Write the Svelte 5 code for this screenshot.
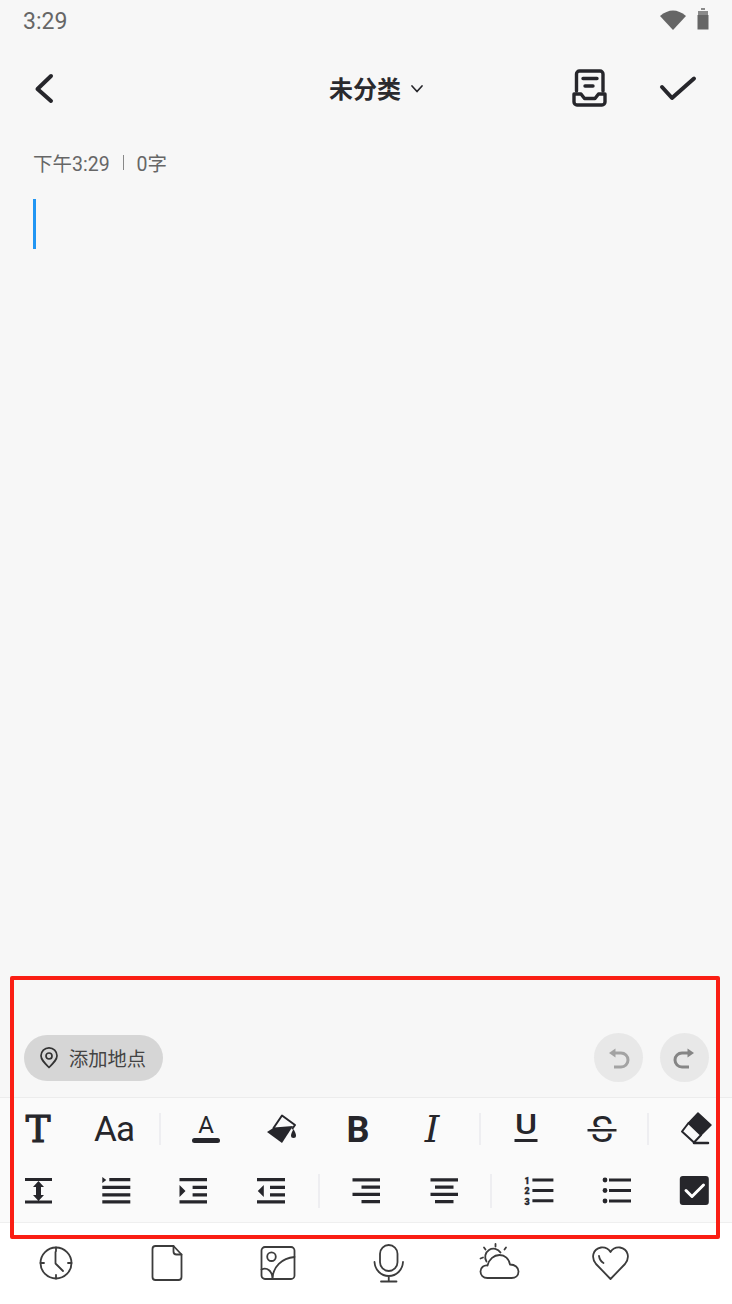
<script>
  const clockTicks = [0, 90, 180, 270];
</script>

<div class="screen">
  <div class="status">
    <span class="time">3:29</span>
    <svg class="wifi" width="28" height="22" viewBox="0 0 28 22"><path d="M1 7Q14-4 27 7L14 21Z" fill="#666" /></svg>
    <svg class="batt" width="12" height="22" viewBox="0 0 12 22"><path d="M4 0H8V2H4ZM1 3H11V21H1Z" fill="#8a8a8a" /><path d="M0.5 7H11.5V21.500H0.500Z" fill="#666" /></svg>
  </div>

  <header class="head">
    <div class="left">
      <svg width="24" height="36" viewBox="0 0 24 36"><path d="M19 5 5.500 18 19 30" class="s" stroke-width="4" /></svg>
    </div>
    <div class="title"><span>未分类</span><svg width="14" height="10" viewBox="0 0 14 10"><path d="M2 2 7 7.500 12 2" class="s" stroke-width="1.700" /></svg></div>
    <div class="right">
      <svg width="44" height="44" viewBox="0 0 44 44">
        <path d="M8.500 24V7a3 3 0 0 1 3-3H32a3 3 0 0 1 3 3V24M15 11.500H29M17 19H25" class="s" stroke-width="3.400" />
        <path d="M6 27H13L16.500 31.500H27L30.500 27H37V35a3 3 0 0 1-3 3H9a3 3 0 0 1-3-3Z" class="s" stroke-width="3.400" />
      </svg>
      <svg width="44" height="44" viewBox="0 0 44 44"><path d="M6 20 16 31 38 11.500" class="s" stroke-width="4" /></svg>
    </div>
  </header>

  <div class="meta"><span>下午3:29</span><i></i><span>0字</span></div>
  <div class="caret"></div>
  <div class="grow"></div>

  <div class="actions">
    <div class="pill">
      <svg width="20" height="24" viewBox="0 0 20 24"><path d="M10 21.500C5 16.500 2 13.500 2 9.800A8 8 0 0 1 18 9.800C18 13.500 15 16.500 10 21.500Z" class="s t" stroke-width="1.700" /><circle cx="10" cy="10" r="3" class="s t" stroke-width="1.700" /></svg>
      <span>添加地点</span>
    </div>
    <div class="round">
      <svg width="49" height="49" viewBox="0 0 49 49"><path d="M20 20H27a7 7 0 0 1 0 14H20" class="s u" stroke-width="3" /><path d="M15 20 21.500 15.500V24.500Z" fill="#a3a3a3" /></svg>
    </div>
    <div class="round">
      <svg width="49" height="49" viewBox="0 0 49 49"><path d="M29 20H22a7 7 0 0 0 0 14H29" class="s r" stroke-width="3" /><path d="M34 20 27.500 15.500V24.500Z" fill="#858585" /></svg>
    </div>
  </div>

  <div class="toolbar">
    <div class="row">
      <div class="cell"><svg class="ic lt" viewBox="0 -10 40 60"><text x="20" y="33" class="serif-b" font-size="37">T</text></svg></div>
      <div class="cell"><svg class="ic lt" viewBox="0 -10 40 60"><text x="20" y="32" class="sans" font-size="35" letter-spacing="-1">Aa</text></svg></div>
      <div class="slot"><b></b></div>
      <div class="cell"><svg class="ic lt" viewBox="0 -10 40 60"><text x="20" y="24" class="sans" font-size="24">A</text><rect x="6" y="29" width="28" height="5" rx="2.500" /></svg></div>
      <div class="cell"><svg class="ic" viewBox="0 0 40 40">
        <path d="M5 23 12 18.500 31 17 20 34Z" />
        <path d="M11.500 19 20 6.500 33 16 30.500 19.500" class="s" stroke-width="2" />
        <path d="M31.500 20C33 23 34 25 34 26.500A2.500 2.500 0 0 1 29 26.500C29 25 30 23 31.500 20Z" />
      </svg></div>
      <div class="cell"><svg class="ic lt" viewBox="0 -10 40 60"><text x="20" y="33" class="sans-b" font-size="36">B</text></svg></div>
      <div class="cell"><svg class="ic lt" viewBox="0 -10 40 60"><text x="18" y="33" class="serif-i" font-size="37">I</text></svg></div>
      <div class="slot"><b></b></div>
      <div class="cell"><svg class="ic lt" viewBox="0 -10 40 60"><text transform="translate(20 25) scale(1.250 1)" class="sans-m" font-size="27">U</text><rect x="8.500" y="30" width="23" height="3" /></svg></div>
      <div class="cell"><svg class="ic lt" viewBox="0 -10 40 60"><text x="20" y="33" class="sans" font-size="37">S</text><rect x="5" y="18" width="30" height="6.500" style="fill:#fafafa" /><rect x="5.500" y="20" width="29" height="2.500" /></svg></div>
      <div class="slot"><b></b></div>
      <div class="cell"><svg class="ic" viewBox="0 0 40 40">
        <path d="M24 4 37 16 27 26 14.500 14Z" stroke="#26262b" stroke-width="1.500" stroke-linejoin="round" />
        <path d="M14.500 14 27 26 20 33.500 8 22.500Z" style="fill:#fafafa" stroke="#26262b" stroke-width="2" stroke-linejoin="round" />
        <path d="M20 34H34" class="s" stroke-width="2.500" />
      </svg></div>
    </div>
    <div class="row">
      <div class="cell"><svg class="ic" viewBox="0 0 40 40"><path d="M6 7H33V10H6ZM6 29.500H33V32.500H6ZM19.500 10 25 16H22V24H25L19.500 30 14 24H17V16H14Z" /></svg></div>
      <div class="cell"><svg class="ic" viewBox="0 0 40 40"><path d="M5.300 6 9.300 9 5.300 12ZM12.300 7H33.300V10.300H12.300ZM5.300 14.700H33.300V18H5.300ZM5.300 22.300H33.300V25.600H5.300ZM5.300 29.300H33.300V32.600H5.300Z" /></svg></div>
      <div class="cell"><svg class="ic" viewBox="0 0 40 40"><path d="M5.500 7H33V10.300H5.500ZM5.500 29.300H33V32.600H5.500ZM18.600 14.700H33V18H18.600ZM18.600 22.300H33V25.600H18.600ZM5.500 14 11.500 20 5.500 26Z" /></svg></div>
      <div class="cell"><svg class="ic" viewBox="0 0 40 40"><path d="M5 7H33V10.300H5ZM5 29.300H33V32.600H5ZM18 14.700H33V18H18ZM18 22.300H33V25.600H18ZM11.800 14 5.800 20 11.800 26Z" /></svg></div>
      <div class="slot"><b class="tall"></b></div>
      <div class="cell"><svg class="ic" viewBox="0 0 40 40"><path d="M6.500 7.200H34V10.500H6.500ZM15.500 14.500H34V17.800H15.500ZM6.500 21.700H34V25H6.500ZM15.500 28.900H34V32.200H15.500Z" /></svg></div>
      <div class="cell"><svg class="ic" viewBox="0 0 40 40"><path d="M6.500 7.200H34V10.500H6.500ZM11 14.500H29.500V17.800H11ZM6.500 21.700H34V25H6.500ZM11 28.900H29.500V32.200H11Z" /></svg></div>
      <div class="slot"><b class="tall"></b></div>
      <div class="cell"><svg class="ic" viewBox="0 0 40 40">
        <text x="9" y="12.500" class="num" font-size="8.800">1</text><text x="9" y="23" class="num" font-size="8.800">2</text><text x="9" y="33.500" class="num" font-size="8.800">3</text>
        <path d="M14.400 7.500H35.400V10.500H14.400ZM14.400 18H35.400V21H14.400ZM14.400 28.300H35.400V31.300H14.400Z" />
      </svg></div>
      <div class="cell"><svg class="ic" viewBox="0 0 40 40">
        <circle cx="10" cy="9" r="2.400" /><circle cx="10" cy="19.500" r="2.400" /><circle cx="10" cy="30" r="2.400" />
        <path d="M14 7.500H36V10.500H14ZM14 18H36V21H14ZM14 28.500H36V31.500H14Z" />
      </svg></div>
      <div class="cell"><svg class="ic" viewBox="0 0 40 40"><rect x="6.800" y="5" width="29" height="29" rx="3" /><path d="M13 19.500 19 25.500 30.500 14" stroke="#fff" stroke-width="3" stroke-linecap="round" stroke-linejoin="round" style="fill:none" /></svg></div>
    </div>
  </div>

  <nav class="bottom">
    <svg class="bi" viewBox="0 0 44 44">
      <circle cx="22" cy="22" r="15.500" />
      {#each clockTicks as a}<path d="M22 6.500V10" transform="rotate({a} 22 22)" />{/each}
      <path d="M21.500 11V22.500L29 30" />
    </svg>
    <svg class="bi" viewBox="0 0 44 44">
      <path d="M10.500 5H28.500L36.500 13.500V36a3 3 0 0 1-3 3H10.500a3 3 0 0 1-3-3V8a3 3 0 0 1 3-3Z" />
      <path d="M28.500 5V10.500a3 3 0 0 0 3 3H36.500" />
    </svg>
    <svg class="bi" viewBox="0 0 44 44">
      <rect x="5.500" y="6" width="33" height="32" rx="3.500" />
      <circle cx="15.500" cy="15.700" r="4.300" />
      <path d="M16.500 38C16.500 26 26 17 38.500 16M5.500 28.500C11 26 16.500 30 16.500 38" />
    </svg>
    <svg class="bi" viewBox="0 0 44 44">
      <rect x="13" y="4" width="17.500" height="26" rx="8.750" />
      <path d="M7.500 21C8 29 14 35 21.750 35 29.500 35 35.500 29 36 21M21.750 35V40M14 40.500H29.500" />
    </svg>
    <svg class="bi" viewBox="0 0 44 44">
      <path d="M9.500 37C5 37 2.500 34 2.500 30.500 2.500 26.500 6 24 9.500 24.500 11 18 16 14 21.500 14 27 14 31 18 32 23.500 37 23.500 40.500 26.500 40.500 30.500 40.500 34.500 37.500 37 33.500 37Z" />
      <path d="M8.500 20.500A8 8 0 0 1 22.500 11.500M6 6.500 7.500 8.500M17.500 3V5.500M28 6.500 26.500 8.500M2.500 17.500 5 16.500" />
    </svg>
    <svg class="bi" viewBox="0 0 44 44">
      <path d="M21.500 38 7 23C2 17 3.500 8 12 6.500 16 6 19.500 8 21.500 11 23.500 8 27 6 31 6.500 39.500 8 41 17 36 23Z" />
      <path d="M10 15C10.500 18 12 20.500 14.500 22" />
    </svg>
  </nav>

  <div class="mark"></div>
</div>

<style>
  :global(body) { margin: 0; background: #f7f7f7; }
  .screen {
    position: relative;
    width: 732px;
    height: 1304px;
    display: flex;
    flex-direction: column;
    background: #f7f7f7;
    font-family: Roboto, "Noto Sans CJK SC", sans-serif;
    overflow: hidden;
  }
  svg { display: block; }
  .s { fill: none; stroke: #26262b; stroke-linecap: round; stroke-linejoin: round; }
  .s.t { stroke: #333; }
  .s.u { stroke: #a3a3a3; stroke-linecap: butt; }
  .s.r { stroke: #858585; stroke-linecap: butt; }

  .status { height: 42px; display: flex; align-items: center; padding: 0 23px; box-sizing: border-box; }
  .time { font-size: 23px; color: #666; flex: 1; }
  .wifi { margin: -3px 10px 0 0; }
  .batt { margin-top: -4px; }

  .head { height: 94px; display: grid; grid-template-columns: 329px auto 1fr; align-items: center; }
  .left { padding-left: 32px; }
  .title { display: flex; align-items: center; gap: 9px; font-size: 24px; font-weight: 700; color: #2a2a2e; font-family: "Noto Sans CJK SC", sans-serif; }
  .title span { margin-top: -3px; }
  .right { display: flex; justify-content: flex-end; gap: 44px; padding-right: 32px; }

  .meta { height: 28px; margin-top: 12px; display: flex; align-items: center; padding-left: 33px; font-size: 19.500px; color: #666; }
  .meta i { width: 1px; height: 15px; background: #888; margin: 0 13px; }
  .caret { width: 3px; height: 50px; margin: 23px 0 0 33px; background: #2196f3; }
  .grow { flex: 1; }

  .actions { display: flex; align-items: center; padding: 0 23px 15px 24px; gap: 17px; }
  .pill {
    height: 46px; width: 139px; box-sizing: border-box; margin-right: auto;
    display: flex; align-items: center; gap: 10px; padding-left: 15px;
    background: #d6d6d6; border-radius: 23px;
    font-size: 19.250px; color: #444;
  }
  .round { width: 49px; height: 49px; border-radius: 50%; background: #e8e8e8; }

  .toolbar { height: 126px; box-sizing: border-box; background: #fafafa; border-top: 1px solid #ececec; border-bottom: 1px solid #efefef; display: flex; flex-direction: column; }
  .row { flex: 1; display: flex; align-items: center; min-height: 0; }
  .cell { flex: 1; display: flex; justify-content: center; }
  .slot { width: 16px; display: flex; justify-content: center; }
  .slot b { width: 2px; height: 32px; background: #eeeef1; }
  .slot b.tall { height: 34px; }
  .ic { width: 40px; height: 40px; fill: #26262b; }
  .ic.lt { height: 60px; margin: -10px 0; }
  .ic text { text-anchor: middle; fill: #26262b; }
  .serif-b { font-family: "DejaVu Serif", serif; stroke: #26262b; stroke-width: 1.200px; }
  .serif-i { font-family: "DejaVu Serif", serif; font-style: italic; }
  .sans { font-family: Roboto, sans-serif; }
  .sans-m { font-family: Roboto, sans-serif; font-weight: 500; }
  .sans-b { font-family: Roboto, sans-serif; font-weight: 700; }
  .num { font-family: Roboto, sans-serif; font-weight: 900; stroke: #26262b; stroke-width: 0.400px; }

  .bottom { height: 81px; background: #fff; display: grid; grid-template-columns: repeat(6, 111px); justify-items: center; align-content: start; padding-top: 18px; box-sizing: border-box; }
  .bi { width: 44px; height: 44px; fill: none; stroke: #3c3c3c; stroke-width: 1.800; stroke-linecap: round; stroke-linejoin: round; }

  .mark { position: absolute; left: 10px; top: 976px; width: 710px; height: 263px; box-sizing: border-box; border: 4px solid #fa1e14; border-radius: 2px; pointer-events: none; }
</style>
